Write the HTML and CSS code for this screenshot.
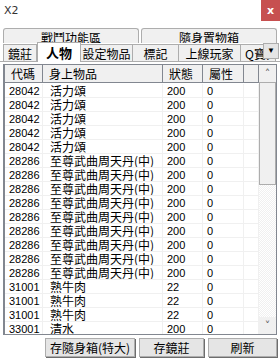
FILE: index.html
```html
<!DOCTYPE html>
<html lang="zh-Hant">
<head>
  <meta charset="UTF-8">
  <title>X2</title>
  <link rel="stylesheet" href="styles.css">
</head>
<body>
  <div class="window">
    <header class="titlebar">
      <span class="title">X2</span>
      <button class="close">x</button>
    </header>

    <!-- 分頁 -->
    <div class="tabs-back">
      <div class="tab-back">戰鬥功能區</div>
      <div class="tab-back">隨身置物箱</div>
    </div>
    <div class="tabs-front">
      <div class="tab" style="width:32px">鏡莊</div>
      <div class="tab active" style="width:42px">人物</div>
      <div class="tab" style="width:51px">設定物品</div>
      <div class="tab" style="width:45px">標記</div>
      <div class="tab" style="width:61px">上線玩家</div>
      <div class="tab clip" style="width:30px">Q寶貝</div>
      <button class="tab-arrow">&#9660;</button>
    </div>

    <!-- 物品列表 -->
    <div class="list">
      <div class="list-main">
        <div class="row head">
          <div>代碼</div><div>身上物品</div><div>狀態</div><div>屬性</div><div></div>
        </div>
        <div id="rows"></div>
      </div>
      <div class="scrollbar">
        <div class="sb-btn">&#708;</div>
        <div class="sb-thumb"></div>
        <div class="sb-track"></div>
        <div class="sb-btn">&#709;</div>
      </div>
    </div>

    <div class="buttons">
      <button class="btn" style="width:90px">存隨身箱(特大)</button>
      <button class="btn" style="width:65px">存鏡莊</button>
      <button class="btn" style="width:69px">刷新</button>
    </div>
  </div>

  <script>
    // 列表資料
    const items = [];
    for (let i = 0; i < 5; i++) items.push(["28042", "活力頌", "200", "0"]);
    for (let i = 0; i < 9; i++) items.push(["28286", "至尊武曲周天丹(中)", "200", "0"]);
    for (let i = 0; i < 3; i++) items.push(["31001", "熟牛肉", "22", "0"]);
    items.push(["33001", "清水", "200", "0"]);

    const box = document.getElementById("rows");
    items.forEach(it => {
      const row = document.createElement("div");
      row.className = "row";
      row.innerHTML = it.map(v => `<div>${v}</div>`).join("") + "<div></div>";
      box.appendChild(row);
    });
  </script>
</body>
</html>
```

FILE: styles.css
```css
body {
  margin: 0;
  background: #fff;
  font-family: "Liberation Sans", "Noto Sans CJK TC", sans-serif;
  font-size: 11px;
  color: #000;
}

.window {
  width: 280px;
  height: 359px;
  overflow: hidden;
  background: #fff;
}

.titlebar {
  display: flex;
  justify-content: space-between;
  height: 27px;
}

.title {
  padding: 4px 0 0 4px;
  font-family: "DejaVu Sans", sans-serif;
  font-size: 11px;
  color: #333;
}

.close {
  width: 19px;
  height: 21px;
  border: none;
  padding: 0;
  background: #c75050;
  color: #fff;
  font-family: "DejaVu Sans", sans-serif;
  font-weight: bold;
  font-size: 11px;
  line-height: 19px;
}

.tabs-back {
  display: flex;
  gap: 2px;
  padding: 0 3px;
  height: 14px;
  margin-top: 1px;
}

.tab-back {
  flex: 1;
  border: 1px solid #adadad;
  border-bottom: none;
  border-radius: 3px 3px 0 0;
  background: #f0f0f0;
  text-align: center;
  line-height: 17px;
  font-family: "Noto Sans CJK TC", sans-serif;
  font-size: 12px;
  height: 14px;
  overflow: hidden;
}

.tabs-front {
  display: flex;
  align-items: flex-end;
  padding-left: 3px;
  height: 19px;
  border-bottom: 1px solid #adadad;
  position: relative;
}

.tab {
  height: 16px;
  border: 1px solid #adadad;
  border-bottom: none;
  border-left: none;
  background: #f0f0f0;
  text-align: center;
  font-family: "Noto Sans CJK TC", sans-serif;
  font-size: 12px;
  line-height: 18px;
  overflow: hidden;
  white-space: nowrap;
}

.tab:first-child {
  border-left: 1px solid #adadad;
}

.tab.active {
  height: 19px;
  margin-bottom: -1px;
  background: #fff;
  border-left: 1px solid #adadad;
  font-weight: bold;
  font-size: 13px;
  line-height: 19px;
}

.tab.clip {
  text-align: left;
  padding-left: 4px;
}

.tab-arrow {
  position: absolute;
  right: 1px;
  bottom: 2px;
  width: 16px;
  height: 16px;
  padding: 0;
  border: 1px solid #adadad;
  background: #e5e5e5;
  font-size: 8px;
  line-height: 14px;
}

.list {
  display: flex;
  margin: 2px 3px 0 3px;
  height: 269px;
  border: 1px solid #828790;
  border-left: 2px solid #828790;
  overflow: hidden;
  background: #fff;
}

.list-main {
  flex: 1;
  overflow: hidden;
}

.row {
  display: grid;
  grid-template-columns: 38px 120px 40px 41px 1fr;
  border-bottom: 1px solid #f0f0f0;
  box-sizing: border-box;
  height: 14px;
}

.row div {
  border-right: 1px solid #f0f0f0;
  padding-left: 4px;
  line-height: 14px;
  white-space: nowrap;
  overflow: hidden;
}

.row div:nth-child(2) {
  padding-left: 7px;
  font-family: "Noto Sans CJK TC", sans-serif;
  font-size: 12px;
}

.row.head {
  height: 18px;
  border-bottom: none;
  margin-bottom: 1px;
}

.row.head div {
  background: #f0f0f0;
  border-right: 1px solid #828790;
  border-bottom: 1px solid #828790;
  line-height: 17px;
  font-family: "Noto Sans CJK TC", sans-serif;
  font-size: 12px;
  padding-left: 6px;
}

.scrollbar {
  width: 17px;
  display: flex;
  flex-direction: column;
  background: #f0f0f0;
}

.sb-btn {
  height: 17px;
  text-align: center;
  font-size: 11px;
  line-height: 18px;
  color: #606060;
  font-family: "DejaVu Sans", sans-serif;
}

.sb-thumb {
  height: 103px;
  background: #f0f0f0;
  border: 1px solid #adadad;
  box-sizing: border-box;
}

.sb-track {
  flex: 1;
  background: repeating-conic-gradient(#f0f0f0 0 25%, #fff 0 50%) 0 0 / 2px 2px;
}

.buttons {
  display: flex;
  justify-content: flex-end;
  gap: 4px;
  padding: 3px 3px 0 0;
}

.btn {
  height: 19px;
  padding: 0;
  border: 1px solid #adadad;
  background: #e5e5e5;
  font-family: "Noto Sans CJK TC", sans-serif;
  font-size: 12px;
  line-height: 16px;
  box-shadow: 1px 1px 0 #6d6d6d;
}
```
